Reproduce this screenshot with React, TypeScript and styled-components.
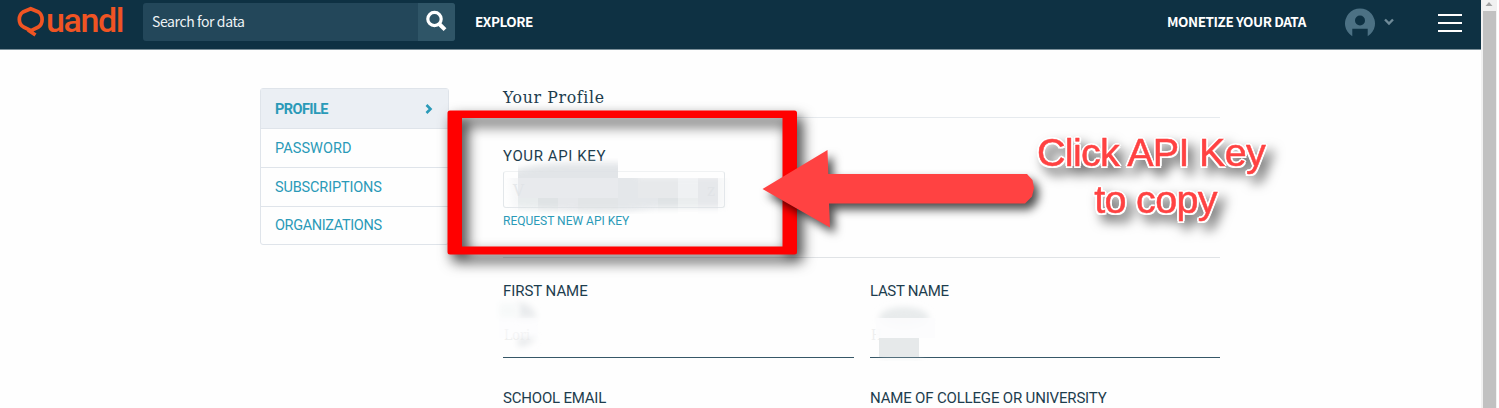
import React from "react";
import styled, { createGlobalStyle } from "styled-components";

const Global = createGlobalStyle`
  * { box-sizing: border-box; }
  html, body { margin: 0; height: 408px; overflow: hidden; background: #fff; }
`;

const sans = `"Noto Sans CJK SC", "Open Sans", sans-serif`;
const label = `Roboto, "Liberation Sans", sans-serif`;
const serif = `"DejaVu Serif Condensed", "DejaVu Serif", serif`;

const Screen = styled.div`
  position: relative;
  display: flex;
  width: 1499px;
  height: 408px;
  overflow: hidden;
`;
const Page = styled.div`
  width: 1481px;
  flex: none;
  background: #fefefe;
`;
const Header = styled.header`
  display: flex;
  align-items: flex-start;
  height: 50px;
  background: #0e3143;
  border-bottom: 1px solid #7b8f99;
  color: #fff;
  font-family: ${sans};
`;
const Logo = styled.div`
  display: flex;
  width: 126px;
  padding-left: 17px;
  color: #f05423;
`;
const LogoText = styled.span`
  font: 500 34px/41px ${label};
  letter-spacing: -1.4px;
`;
const Search = styled.div`
  display: flex;
  width: 312px;
  height: 38px;
  margin: 3px 0 0 17px;
  border-radius: 3px;
  overflow: hidden;
  background: #23475a;
`;
const SearchText = styled.span`
  flex: 1;
  padding-left: 9px;
  font-size: 14px;
  line-height: 36px;
  letter-spacing: -0.4px;
  color: #eef2f4;
`;
const SearchButton = styled.span`
  width: 37px;
  background: #2f5567;
`;
const NavLink = styled.span<{ $left: string }>`
  margin-left: ${(p) => p.$left};
  font-size: 13.5px;
  font-weight: 700;
  line-height: 42px;
  letter-spacing: -0.43px;
  white-space: nowrap;
`;
const Account = styled.span`
  width: 54px;
  height: 49px;
  margin: 0 41px 0 37px;
`;
const Burger = styled.span`
  display: grid;
  gap: 6px;
  width: 24px;
  margin: 14px 19px 0 0;
`;
const Bar = styled.i`
  height: 2px;
  background: #fff;
`;
const Body = styled.div`
  display: flex;
  align-items: flex-start;
  padding: 38px 0 0 260px;
`;
const Side = styled.nav`
  width: 189px;
  border: 1px solid #dfe4ea;
  border-radius: 3px;
  font-family: ${label};
`;
const SideItem = styled.div<{ $active?: boolean; $ls: string }>`
  display: flex;
  justify-content: space-between;
  align-items: center;
  height: 39px;
  padding: 1px 15px 0 14px;
  font-size: 14.5px;
  font-weight: ${(p) => (p.$active ? 700 : 400)};
  letter-spacing: ${(p) => p.$ls};
  color: #2a9ab8;
  background: ${(p) => (p.$active ? "#ebeff4" : "transparent")};
  & + & { border-top: 1px solid #dfe4ea; }
  &:last-child { height: 38px; padding-top: 0; }
`;
const Main = styled.main`
  width: 717px;
  margin-left: 54px;
  color: #1d3d4e;
`;
const Title = styled.h1`
  height: 30px;
  margin: 0;
  border-bottom: 1px solid #e6eaee;
  font: 400 17.5px/19px ${serif};
  letter-spacing: 0.65px;
`;
const KeyBlock = styled.section`
  height: 140px;
  padding-top: 28px;
  border-bottom: 1px solid #e0e3e6;
`;
const Label = styled.div<{ $ls: string }>`
  font: 400 15px/20px ${label};
  letter-spacing: ${(p) => p.$ls};
  white-space: nowrap;
`;
const KeyField = styled.div`
  display: flex;
  justify-content: space-between;
  align-items: center;
  width: 222px;
  height: 37px;
  margin-top: 5px;
  padding: 0 9px;
  border: 1px solid #e3e7ea;
  border-top-color: #f0f2f3;
  border-radius: 3px;
  color: #e4e7e9;
  font: 17px ${serif};
`;
const Request = styled.div`
  margin-top: 5px;
  font: 400 12px/16px ${label};
  color: #2a9ab8;
`;
const Fields = styled.section`
  display: grid;
  grid-template-columns: 351px 350px;
  column-gap: 16px;
  row-gap: 30px;
  padding-top: 23px;
`;
const Value = styled.div`
  height: 57px;
  padding: 24px 0 0 1px;
  border-bottom: 1px solid #365767;
  color: #eeefef;
  font: 14px/20px ${serif};
`;
const Scrollbar = styled.div`
  display: flex;
  flex-direction: column;
  align-items: center;
  width: 16px;
  background: #f1f1f1;
`;
const Thumb = styled.div`
  width: 13px;
  flex: 1;
  background: #c1c1c1;
`;
const Overlay = styled.svg`
  position: absolute;
  left: 0;
  top: 0;
`;
const Callout = styled.div`
  position: absolute;
  left: 1000px;
  top: 129px;
  width: 302px;
  text-align: center;
  font: 39.5px/47px "Liberation Sans", sans-serif;
  letter-spacing: -0.7px;
  color: #ff4242;
  -webkit-text-stroke: 0.5px #ff4242;
  text-shadow: 2px 0 #fff, -2px 0 #fff, 0 2px #fff, 0 -2px #fff,
    1.5px 1.5px #fff, -1.5px 1.5px #fff, 1.5px -1.5px #fff, -1.5px -1.5px #fff;
  filter: drop-shadow(6px 7px 6px rgba(0, 0, 0, 0.55));
`;
const SecondLine = styled.div`
  padding-left: 9px;
`;

// x, y, width, height, opacity of each redaction tile
const tiles = [
  [518, 158, 100, 20, 0.85],
  [518, 178, 100, 20, 0.6],
  [618, 178, 20, 20, 0.75],
  [638, 178, 40, 20, 0.62],
  [678, 178, 20, 20, 0.3],
  [698, 178, 20, 20, 0.65],
  [518, 198, 20, 16, 0.55],
  [538, 198, 20, 16, 0.95],
  [558, 198, 20, 16, 0.65],
  [578, 198, 40, 16, 0.8],
  [618, 198, 40, 16, 0.75],
  [658, 198, 20, 16, 0.95],
  [678, 198, 20, 14, 0.5],
  [698, 198, 20, 16, 0.65],
];

export default function App() {
  return (
    <>
      <Global />
      <Screen>
        <Page>
          <Header>
            <Logo>
              <svg width="29" height="40" viewBox="0 0 29 40">
                <path
                  d="M13.7 8.7 21.5 12Q25.1 14.5 25.1 19.5T21.5 27L14 30.7 6.5 27Q2.3 24.5 2.3 19.5T6 12ZM11 30 18.5 35"
                  fill="none"
                  stroke="#f05423"
                  strokeWidth="3.7"
                  strokeLinejoin="round"
                />
              </svg>
              <LogoText>uandl</LogoText>
            </Logo>
            <Search>
              <SearchText>Search for data</SearchText>
              <SearchButton>
                <svg width="37" height="38" fill="none" stroke="#fff">
                  <circle cx="16.5" cy="16" r="6.7" strokeWidth="3.2" />
                  <path d="M21.3 21 27 26.7" strokeWidth="4" />
                </svg>
              </SearchButton>
            </Search>
            <NavLink $left="20px">EXPLORE</NavLink>
            <NavLink $left="auto">MONETIZE YOUR DATA</NavLink>
            <Account>
              <svg width="54" height="49">
                <path d="M9.3 36.3A15 15 0 1 1 24.7 36.3V28.8H9.3Z" fill="#4c7184" />
                <circle cx="17" cy="20.5" r="5" fill="#0e3143" />
                <path d="m42 19.5 4 4 4-4" fill="none" stroke="#6f8a98" strokeWidth="2.4" />
              </svg>
            </Account>
            <Burger>
              <Bar />
              <Bar />
              <Bar />
            </Burger>
          </Header>
          <Body>
            <Side>
              <SideItem $active $ls="-0.58px">
                PROFILE
                <svg width="8" height="10">
                  <path d="m1.5 1 4 4-4 4" fill="none" stroke="#2a9ab8" strokeWidth="2.6" />
                </svg>
              </SideItem>
              <SideItem $ls="0.05px">PASSWORD</SideItem>
              <SideItem $ls="-0.15px">SUBSCRIPTIONS</SideItem>
              <SideItem $ls="-0.36px">ORGANIZATIONS</SideItem>
            </Side>
            <Main>
              <Title>Your Profile</Title>
              <KeyBlock>
                <Label $ls="0.6px">YOUR API KEY</Label>
                <KeyField>
                  <span>V</span>
                  <span>z</span>
                </KeyField>
                <Request>REQUEST NEW API KEY</Request>
              </KeyBlock>
              <Fields>
                <div>
                  <Label $ls="-0.05px">FIRST NAME</Label>
                  <Value>Lori</Value>
                </div>
                <div>
                  <Label $ls="-0.32px">LAST NAME</Label>
                  <Value>H</Value>
                </div>
                <Label $ls="-0.2px">SCHOOL EMAIL</Label>
                <Label $ls="-0.17px">NAME OF COLLEGE OR UNIVERSITY</Label>
              </Fields>
            </Main>
          </Body>
        </Page>
        <Scrollbar>
          <svg width="16" height="11">
            <path d="M4.5 6 8 2l3.5 4Z" fill="#a3a3a3" />
          </svg>
          <Thumb />
        </Scrollbar>
        <Overlay width="1499" height="408">
          <defs>
            <filter id="soft" x="-30%" y="-60%" width="160%" height="220%">
              <feGaussianBlur stdDeviation="3" />
            </filter>
            <mask id="brush" maskUnits="userSpaceOnUse" x="480" y="140" width="270" height="90">
              <path
                d="M510 172Q530 164 570 163H620L640 176H725V208H660Q610 214 560 210L512 208Z"
                fill="#fff"
                filter="url(#soft)"
              />
            </mask>
          </defs>
          <g mask="url(#brush)">
            <rect x="500" y="178" width="240" height="34" fill="#e9ecee" opacity="0.35" />
            {tiles.map(([x, y, w, h, o]) => (
              <rect key={`${x}-${y}`} x={x} y={y} width={w} height={h} fill="#dde1e4" opacity={o} />
            ))}
          </g>
          <path d="M518 302Q533 303 537 318H518Z" fill="#e9ebed" filter="url(#soft)" />
          <path d="M499 303H518V318H499Z" fill="#f7f9f9" filter="url(#soft)" />
          <path d="M499 318H538V338H499Z" fill="#fcfcfd" opacity="0.5" />
          <path d="M518 338H536Q532 345 518 347Z" fill="#e8eaec" filter="url(#soft)" />
          <ellipse cx="904" cy="318" rx="25" ry="11" fill="#e8ebec" filter="url(#soft)" />
          <path d="M876 318H935V338H876Z" fill="#fcfcfd" opacity="0.9" />
          <path d="M879 338H919V357H879Z" fill="#e6e9ea" />
          <path d="M880 357H922V359H880Z" fill="#e6e9ea" opacity="0.7" filter="url(#soft)" />
          <path
            d="M450 110.5H794.5Q797 110.5 797 113V252Q797 254.5 794.5 254.5H450Q447.5 254.5 447.5 252V113Q447.5 110.5 450 110.5ZM462 118V246.5H782.5V118Z"
            fillRule="evenodd"
            fill="#f00"
            filter="drop-shadow(5px 7px 7px rgba(0,0,0,.8))"
          />
          <path
            d="M762.5 189 827.5 150 828.3 174H1027L1032.5 180 1034 188 1032 196.5 1025 203.5H829L830 227.5Z"
            fill="#ff4242"
            filter="drop-shadow(5px 6px 5px rgba(0,0,0,.7))"
          />
        </Overlay>
        <Callout>
          <div>Click API Key</div>
          <SecondLine>to copy</SecondLine>
        </Callout>
      </Screen>
    </>
  );
}
